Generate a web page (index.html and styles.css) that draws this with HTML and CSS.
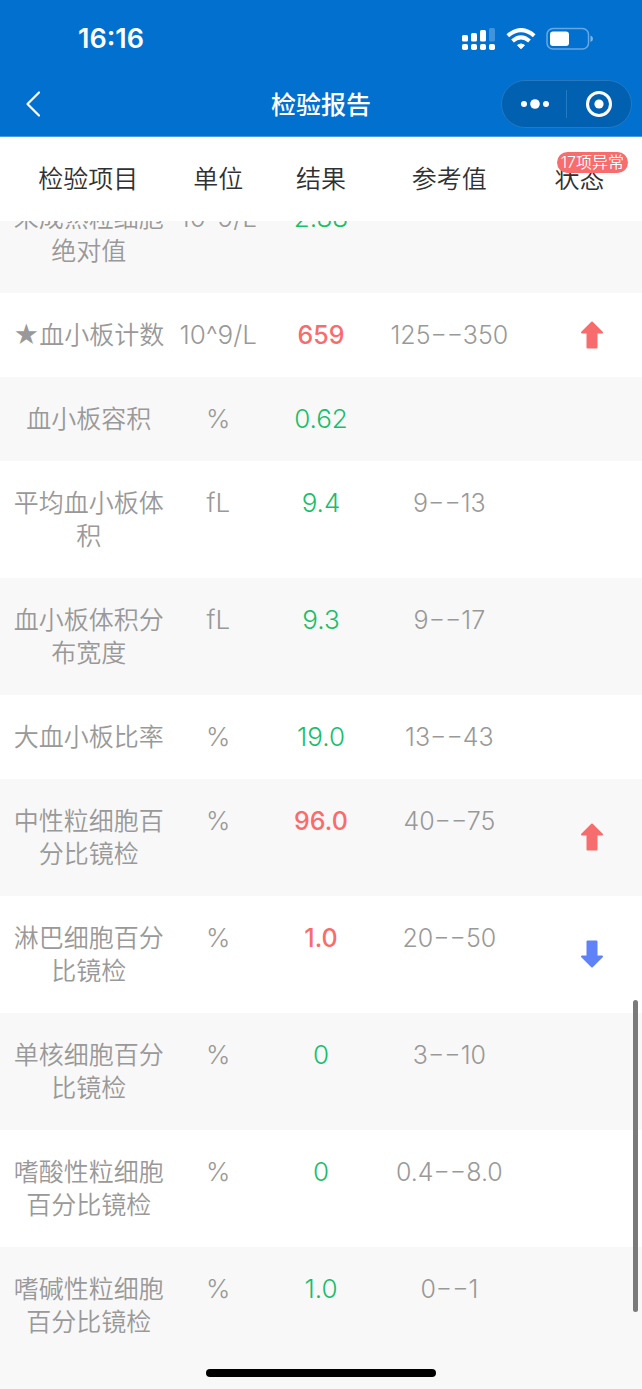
FILE: index.html
```html
<!DOCTYPE html>
<html lang="zh-CN">
<head>
<meta charset="utf-8">
<meta name="viewport" content="width=device-width, initial-scale=1">
<title>检验报告</title>
<link rel="stylesheet" href="styles.css">
</head>
<body>
<svg width="0" height="0" class="sprite" aria-hidden="true">
  <symbol id="arrow" viewBox="0 0 24 28">
    <path d="M12 1.500 22 11.500H16.500V26.500H7.500V11.500H2Z" fill="currentColor" stroke="currentColor" stroke-width="2" stroke-linejoin="round"/>
  </symbol>
</svg>
<header class="top">
  <div class="statusbar">
    <time class="clock">16:16</time>
    <div class="indicators">
      <svg width="34" height="24" viewBox="0 0 34 24" fill="#fff" aria-hidden="true">
        <rect x="0" y="8" width="6" height="6.500" rx="1.500"/><rect x="9" y="6" width="6" height="8.500" rx="1.500"/><rect x="18" y="3" width="6" height="11.500" rx="1.500"/><rect x="27" y="1" width="6" height="13.500" rx="1.500" opacity=".25"/>
        <rect x="0" y="17" width="6" height="6" rx="1.800"/><rect x="9" y="17" width="6" height="6" rx="1.800"/><rect x="18" y="17" width="6" height="6" rx="1.800"/><rect x="27" y="17" width="6" height="6" rx="1.800"/>
      </svg>
      <svg width="30" height="22" viewBox="0 0 30 22" aria-hidden="true">
        <path d="M1.800 7.700Q15-3.600 28.200 7.700" fill="none" stroke="#fff" stroke-width="4"/>
        <path d="M6.500 13Q15 5.600 23.500 13" fill="none" stroke="#fff" stroke-width="4"/>
        <path d="M11.500 17.200Q15 14.600 18.500 17.200L15 20.800Z" fill="#fff" stroke="#fff" stroke-linejoin="round"/>
      </svg>
      <svg width="48" height="24" viewBox="0 0 48 24" aria-hidden="true">
        <rect x="1" y="1.500" width="41.500" height="20.500" rx="6" fill="none" stroke="#fff" stroke-width="1.500" opacity=".4"/>
        <rect x="4" y="4.500" width="19" height="14.500" rx="3" fill="#fff"/>
        <path d="M44.500 8.500q2.500 1 2.500 3.300t-2.500 3.300z" fill="#fff" opacity=".5"/>
      </svg>
    </div>
  </div>
  <nav class="navbar">
    <button class="back" aria-label="返回">
      <svg width="16" height="28" viewBox="0 0 16 28" fill="none" stroke="#fff" stroke-width="2.200" stroke-linecap="round" stroke-linejoin="round"><path d="M14 2.500 2.500 14 14 25.500"/></svg>
    </button>
    <h1 class="title">检验报告</h1>
    <div class="capsule">
      <button class="capsule-btn" aria-label="更多">
        <svg width="30" height="12" viewBox="0 0 30 12" fill="#fff"><circle cx="5" cy="6" r="3"/><circle cx="16" cy="6" r="4.800"/><circle cx="27" cy="6" r="3"/></svg>
      </button>
      <button class="capsule-btn" aria-label="关闭">
        <svg width="28" height="28" viewBox="0 0 28 28"><circle cx="14" cy="14" r="11.500" fill="none" stroke="#fff" stroke-width="3"/><circle cx="14" cy="14" r="4.600" fill="#fff"/></svg>
      </button>
    </div>
  </nav>
</header>
<main class="pane" id="pane">
  <table class="report">
    <colgroup><col class="c-name"><col class="c-unit"><col class="c-result"><col class="c-range"><col class="c-state"></colgroup>
    <thead>
      <tr><th scope="col">检验项目</th><th scope="col">单位</th><th scope="col">结果</th><th scope="col">参考值</th><th scope="col">状态<span class="badge">17项异常</span></th></tr>
    </thead>
    <tbody>
      <tr><td>未成熟粒细胞绝对值</td><td class="unit">10^9/L</td><td class="ok">2.88</td><td></td><td></td></tr>
      <tr><td>★血小板计数</td><td class="unit">10^9/L</td><td class="bad">659</td><td>125−−350</td><td class="state"><svg class="arrow up" role="img" aria-label="偏高"><use href="#arrow"/></svg></td></tr>
      <tr><td>血小板容积</td><td class="unit">%</td><td class="ok">0.62</td><td></td><td></td></tr>
      <tr><td>平均血小板体积</td><td class="unit">fL</td><td class="ok">9.4</td><td>9−−13</td><td></td></tr>
      <tr><td>血小板体积分布宽度</td><td class="unit">fL</td><td class="ok">9.3</td><td>9−−17</td><td></td></tr>
      <tr><td>大血小板比率</td><td class="unit">%</td><td class="ok">19.0</td><td>13−−43</td><td></td></tr>
      <tr><td>中性粒细胞百分比镜检</td><td class="unit">%</td><td class="bad">96.0</td><td>40−−75</td><td class="state"><svg class="arrow up" role="img" aria-label="偏高"><use href="#arrow"/></svg></td></tr>
      <tr><td>淋巴细胞百分比镜检</td><td class="unit">%</td><td class="bad">1.0</td><td>20−−50</td><td class="state"><svg class="arrow down" role="img" aria-label="偏低"><use href="#arrow"/></svg></td></tr>
      <tr><td>单核细胞百分比镜检</td><td class="unit">%</td><td class="ok">0</td><td>3−−10</td><td></td></tr>
      <tr><td>嗜酸性粒细胞百分比镜检</td><td class="unit">%</td><td class="ok">0</td><td>0.4−−8.0</td><td></td></tr>
      <tr><td>嗜碱性粒细胞百分比镜检</td><td class="unit">%</td><td class="ok">1.0</td><td>0−−1</td><td></td></tr>
    </tbody>
  </table>
</main>
<div class="scroll-thumb"></div>
<div class="home-indicator"></div>
<script src="main.js"></script>
</body>
</html>
```
FILE: styles.css
```css
* { box-sizing: border-box; }
body {
  margin: 0;
  height: 100vh;
  display: flex;
  flex-direction: column;
  position: relative;
  overflow: hidden;
  background: #f8f8f8;
  color: #999;
  font-family: Inter, "Noto Sans CJK SC", sans-serif;
  font-size: 25px;
  line-height: 33px;
}
button { border: 0; padding: 0; background: none; color: inherit; }
svg { display: block; }
.sprite { position: absolute; }

.top {
  flex: none;
  background: #0170cf;
  border-bottom: 1px solid #4a9ade;
  color: #fff;
}
.statusbar {
  height: 72px;
  padding: 5px 48px 0 78px;
  display: flex;
  align-items: center;
  justify-content: space-between;
}
.clock { font-size: 27px; font-weight: 600; }
.indicators { display: flex; align-items: center; gap: 10px; }
.navbar {
  height: 64px;
  padding: 0 10px 0 25px;
  display: grid;
  grid-template-columns: 1fr auto 1fr;
  align-items: center;
}
.back { justify-self: start; }
.title { margin: 2px 0 0 -15px; font-size: 25px; font-weight: 500; }
.capsule {
  justify-self: end;
  width: 131px;
  height: 48px;
  display: flex;
  align-items: center;
  border: 1px solid #2379c2;
  border-radius: 24px;
  background: #0260b0;
}
.capsule-btn {
  flex: 1;
  height: 28px;
  display: flex;
  align-items: center;
  justify-content: center;
}
.capsule-btn + .capsule-btn { border-left: 1px solid #2379c2; }

.pane { flex: 1; min-height: 0; overflow-y: auto; scrollbar-width: none; padding-bottom: 26px; }
.report { width: 100%; table-layout: fixed; border-collapse: collapse; text-align: center; }
.c-name { width: 27.5%; }
.c-unit { width: 13%; }
.c-result { width: 19%; }
.c-range { width: 21%; }
.c-state { width: 19.5%; }
th, td { padding: 26px 0 25px; vertical-align: top; font-weight: 350; }
th { position: sticky; top: 0; z-index: 1; background: #fff; color: #303133; }
td { font-weight: 300; }
td:first-child { padding-left: 13px; padding-right: 12px; font-weight: 350; }
tbody tr { background: #fff; }
tbody tr:nth-child(odd) { background: #f8f8f8; }
.unit, .ok { padding: 25px 0 26px; font-size: 26px; }
.ok { color: #19be6b; font-weight: 350; }
.bad { color: #fa6b6b; font-weight: 500; }
.badge {
  position: absolute;
  top: 15px;
  right: 14px;
  padding: 0 4px;
  border-radius: 11px;
  background: #f76c6c;
  color: #fff;
  font-size: 16px;
  line-height: 21px;
}
.state { vertical-align: middle; padding: 25px 0 26px 25px; }
.arrow { width: 24px; height: 28px; margin: 0 auto; }
.up { color: #f76c6c; }
.down { color: #5f82f8; transform: rotate(180deg); }

.scroll-thumb {
  position: absolute;
  top: 72%;
  right: 4px;
  width: 5px;
  height: 312px;
  border-radius: 3px;
  background: #7a7a7a;
}
.home-indicator {
  position: absolute;
  bottom: 12px;
  left: 50%;
  width: 230px;
  height: 8px;
  margin-left: -115px;
  border-radius: 4px;
  background: #000;
}
```
FILE: main.js
```js
const pane = document.getElementById("pane");
pane.scrollTop = 45;
```
